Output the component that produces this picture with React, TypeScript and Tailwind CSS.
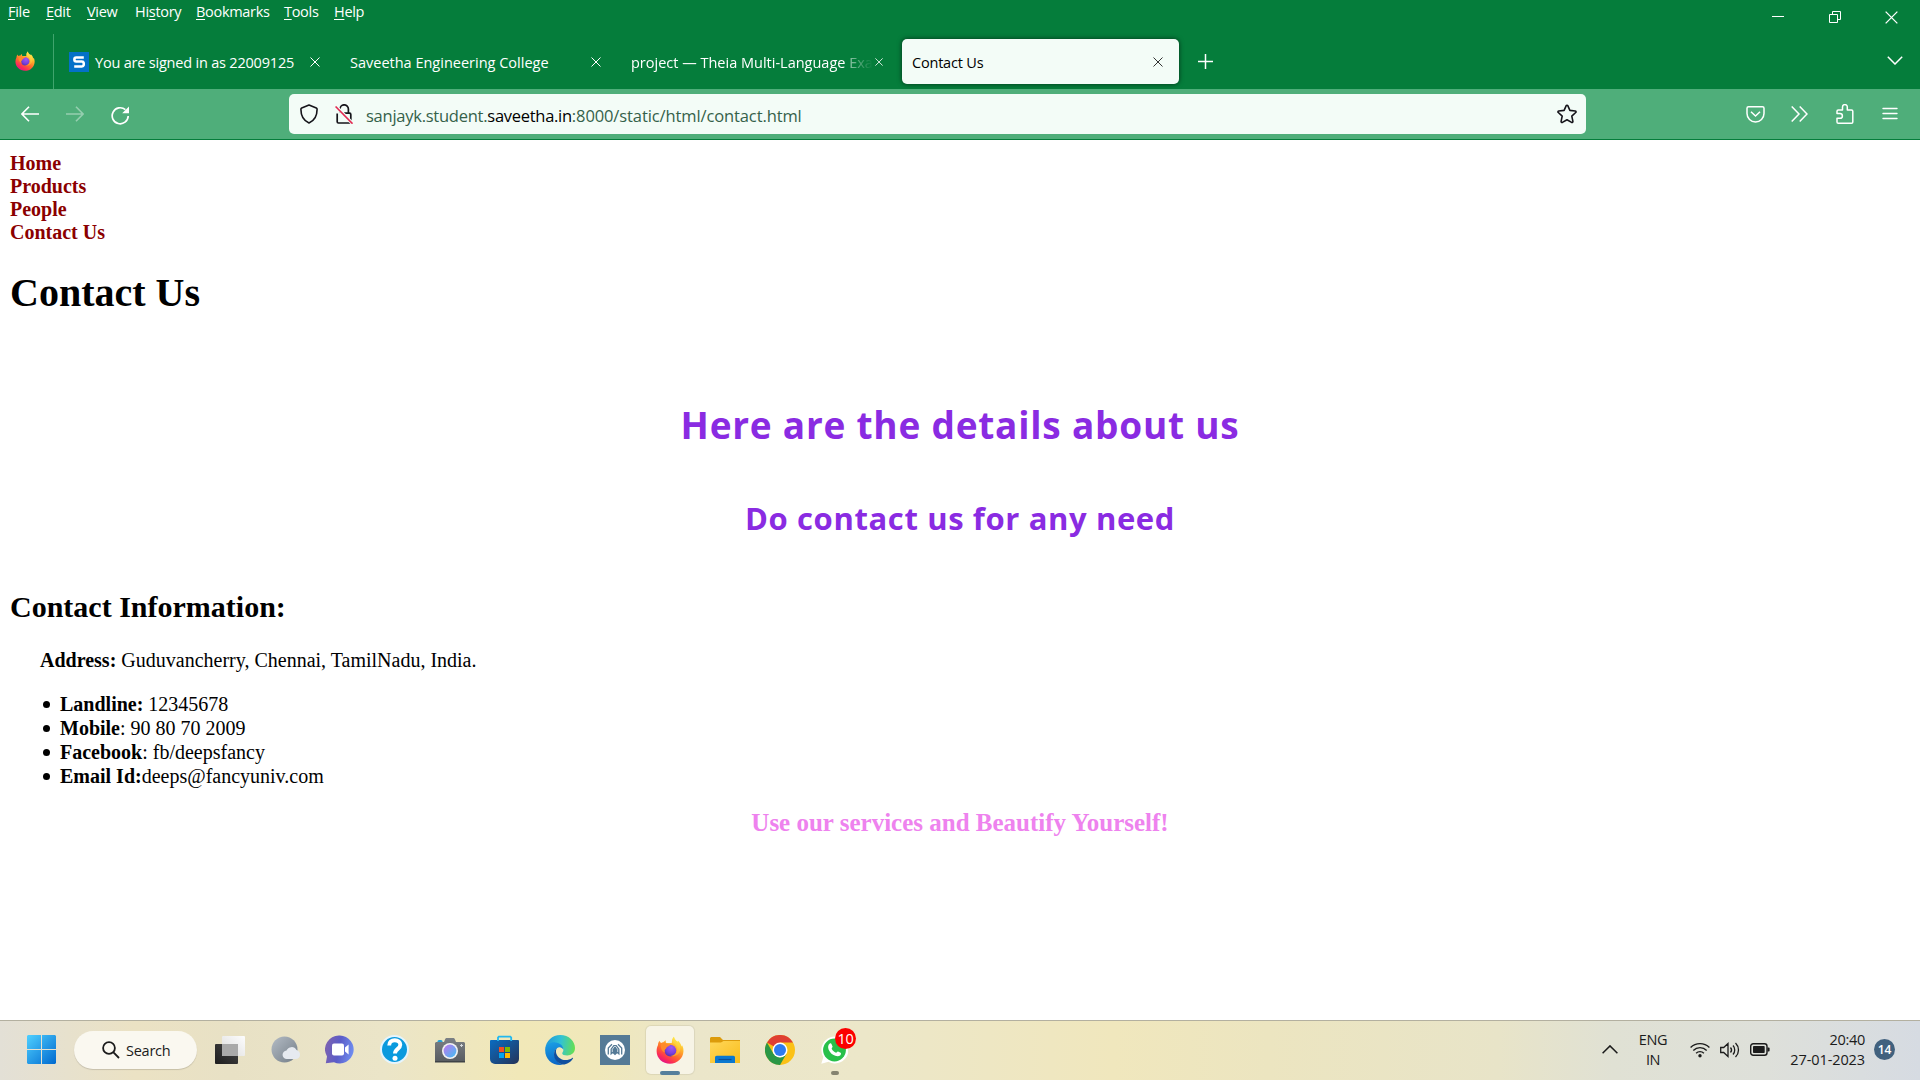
import React from "react";

const MENU = [
  { label: "File", key: 0, width: "w-[38px]" },
  { label: "Edit", key: 0, width: "w-[41px]" },
  { label: "View", key: 0, width: "w-[48px]" },
  { label: "History", key: 2, width: "w-[61px]" },
  { label: "Bookmarks", key: 0, width: "w-[88px]" },
  { label: "Tools", key: 0, width: "w-[50px]" },
  { label: "Help", key: 0, width: "w-[40px]" },
];

function FirefoxLogo({ id, size }: { id: string; size: number }) {
  return (
    <svg width={size} height={size} viewBox="0 0 32 32">
      <defs>
        <linearGradient id={id + "a"} x1="0.8" y1="0.05" x2="0.25" y2="0.95">
          <stop offset="0" stopColor="#fff44f" />
          <stop offset="0.3" stopColor="#ffb52c" />
          <stop offset="0.6" stopColor="#ff6a2b" />
          <stop offset="0.85" stopColor="#fb2b58" />
          <stop offset="1" stopColor="#e31587" />
        </linearGradient>
        <radialGradient id={id + "b"} cx="0.6" cy="0.25" r="0.8">
          <stop offset="0" stopColor="#a05af0" />
          <stop offset="0.6" stopColor="#7b3fe0" />
          <stop offset="1" stopColor="#4f35a8" />
        </radialGradient>
        <linearGradient id={id + "c"} x1="0.7" y1="0" x2="0.3" y2="1">
          <stop offset="0" stopColor="#fff44f" />
          <stop offset="1" stopColor="#ff9a25" />
        </linearGradient>
      </defs>
      <path
        fill={`url(#${id}a)`}
        d="M4 5.5c.5 1.300 1 2 1.800 2.600.9-.5 1.700-.7 2.500-.6.7-1.400 1.700-2.200 3-2.700-.4 1.500 0 2.500.5 3.200h6.200C18.200 4.800 19 2.200 20.500.800c.4 2.600 1.800 4 4 5.700.4-.2.7-.7.8-1.200 2.300 2 3.500 4.600 4 6.600.3-.4.500-.8.5-1.200 1.300 2.200 1.700 4.500 1.600 6.800C31.100 25.500 24.400 31.700 16 31.700S.700 25.200.700 17.300c0-2.600.5-4.900 1.600-7 0-1.700.6-3.400 1.700-4.800z"
      />
      <circle cx="16.400" cy="16.600" r="6.700" fill={`url(#${id}b)`} />
      <path
        fill={`url(#${id}c)`}
        d="M20.500.8c-2 2-2.700 4.600-1.300 7.200 3.500 1.700 5.500 5 4.800 8.700-.8 4-4.200 6-7.600 6 5 1.500 10.700-1.800 11.400-7.700.3-3.500-.8-6-3.300-8.500-2.200-1.700-3.600-3.100-4-5.700z"
        opacity="0.85"
      />
      <path
        fill="#ff8a2a"
        d="M5.800 8.100c1.600-.9 3.300-.8 5 .3 1.200.8 2.700 1.100 5 1.200.5 0 .3.900-.6 1.500l-2.600 1.600c-.6.500-.6 1.300-1.300 2-1.400 1.200-2.200 2.300-.8 4.300-3.700-1-5.700-4.500-4.700-10.900z"
      />
    </svg>
  );
}

function CloseX({ className, size = 10 }: { className?: string; size?: number }) {
  return (
    <svg className={className} width={size} height={size} viewBox="0 0 10 10" fill="none" stroke="currentColor" strokeWidth="1">
      <path d="M.5.5l9 9M9.500.5l-9 9" />
    </svg>
  );
}

function MenuRow() {
  return (
    <div className="flex h-[34px] items-start justify-between">
      <div className="flex pl-2 pt-0.5 text-[14.5px] leading-5 tracking-[-0.3px]">
        {MENU.map((m) => (
          <span key={m.label} className={m.width}>
            {m.label.slice(0, m.key)}
            <span className="underline decoration-1 underline-offset-2">{m.label[m.key]}</span>
            {m.label.slice(m.key + 1)}
          </span>
        ))}
      </div>
      <div className="flex h-[34px] items-center pr-[22px]">
        <svg className="mr-[45px]" width="12" height="12" viewBox="0 0 12 12" stroke="#fff" strokeWidth="1">
          <path d="M0 5.500h12" />
        </svg>
        <svg className="mr-[44px]" width="12" height="12" viewBox="0 0 12 12" fill="none" stroke="#fff">
          <path d="M.5 3.500h8v8h-8zM3.500 3.500v-3h8v8h-3" />
        </svg>
        <CloseX size={13} />
      </div>
    </div>
  );
}

function TabRow() {
  return (
    <div className="flex h-[55px] items-center text-[14.5px]">
      <div className="flex h-full w-[54px] items-center justify-center border-r border-[#4fae7a]/80 pb-0.5 pr-[3px]">
        <FirefoxLogo id="pin" size={20} />
      </div>
      <div className="ml-[5px] flex w-[281px] items-center pl-2.5 pr-5">
        <span className="mr-1.5 flex size-5 items-center justify-center bg-[#0471c8]">
          <svg width="12" height="12" viewBox="0 0 12 12" fill="none" stroke="#fff" strokeWidth="2.600">
            <path d="M10.800 1.500H3.200c-2.400 0-2.400 4 0 4h5.600c2.700 0 2.700 5 0 5H1.200" />
          </svg>
        </span>
        <span className="flex-1 whitespace-nowrap pt-0.5 tracking-[-0.2px]">You are signed in as 22009125</span>
        <CloseX />
      </div>
      <div className="flex w-[281px] items-center pl-2.5 pr-5">
        <span className="flex-1 whitespace-nowrap pt-0.5">Saveetha Engineering College</span>
        <CloseX />
      </div>
      <div className="flex w-[281px] items-center pl-2.5 pr-[19px]">
        <span className="mr-0.5 flex-1 whitespace-nowrap pt-0.5 [mask-image:linear-gradient(to_right,#000_89%,rgba(0,0,0,0.5)_91%,transparent)]">
          project — Theia Multi-Language Exa
        </span>
        <CloseX />
      </div>
      <div className="flex h-[45px] w-[277px] items-center rounded-[5px] bg-[#f3fcf7] pl-2.5 pr-4 text-black shadow-[0_0_5px_rgba(0,0,0,0.6)]">
        <span className="flex-1 pt-0.5 tracking-[-0.2px]">Contact Us</span>
        <CloseX className="text-[#333]" />
      </div>
      <svg className="ml-[19px]" width="15" height="15" viewBox="0 0 15 15" stroke="#fff" strokeWidth="1.500">
        <path d="M7.500 0v15M0 7.500h15" />
      </svg>
      <svg className="-mt-0.5 ml-auto mr-[17px]" width="16" height="9" viewBox="0 0 16 9" fill="none" stroke="#fff" strokeWidth="1.500">
        <path d="M.800.800L8 8l7.200-7.200" />
      </svg>
    </div>
  );
}

function Toolbar() {
  return (
    <div className="flex h-[51px] items-center border-b border-[#057d3b] bg-[#4fae7a]">
      <div className="flex w-[289px] items-center pl-[21px]">
        <svg className="mr-[27px]" width="18" height="16" viewBox="0 0 18 16" fill="none" stroke="#fff" strokeWidth="1.600">
          <path d="M8 .7L.9 8 8 15.300M1 8h17" />
        </svg>
        <svg className="mr-[27px] opacity-40" width="18" height="16" viewBox="0 0 18 16" fill="none" stroke="#fff" strokeWidth="1.600">
          <path d="M10 .7L17.100 8 10 15.300M17 8H0" />
        </svg>
        <svg className="mt-0.5" width="19" height="19" viewBox="0 0 19 19" fill="none" stroke="#fff" strokeWidth="1.700">
          <path d="M17.200 10a8 8 0 1 1-2.800-6.300" />
          <path d="M18 .4v6.800h-6.800z" fill="#fff" stroke="none" />
        </svg>
      </div>
      <div className="flex h-10 w-[1297px] items-center rounded-[5px] bg-[#f3fcf7] pl-[11px] pr-[9px] text-[16.5px] text-[#35614a]">
        <svg className="mr-[17px]" width="18" height="20" viewBox="0 0 18 20" fill="none" stroke="#15141a" strokeWidth="1.600" strokeLinejoin="round">
          <path d="M9 1l7.300 3.100c.5.200.8.600.8 1.200 0 6-2.400 11.300-8.100 13.700C3.300 16.600.9 11.300.9 5.300c0-.6.3-1 .8-1.200z" />
        </svg>
        <svg className="mr-[13px]" width="18" height="20" viewBox="0 0 18 20" fill="none">
          <path d="M5 8.500V5a4.200 4.200 0 0 1 8.400 0v3.500M2.200 9.500v8.300c0 .8.500 1.200 1.200 1.200h11.200c.7 0 1.200-.4 1.200-1.200v-7.300c0-.8-.5-1.300-1.200-1.300H6" stroke="#15141a" strokeWidth="1.700" />
          <path d="M1 2.500l16.500 17" stroke="#f3fcf7" strokeWidth="3.500" />
          <path d="M.600 2.500L17.500 19.700" stroke="#e22850" strokeWidth="1.600" />
        </svg>
        <span className="whitespace-nowrap pt-[5px]">
          <span className="tracking-[-0.25px]">sanjayk.student.</span>
          <span className="tracking-[-0.28px] text-black">saveetha.in</span>
          <span className="tracking-[-0.11px]">:8000/static/html/contact.html</span>
        </span>
        <svg className="ml-auto" width="20" height="20" viewBox="0 0 20 20" fill="none" stroke="#15141a" strokeWidth="1.600" strokeLinejoin="round">
          <path d="M10 1.200c.4 0 .7.200.8.500l2.100 4.700 5.300.6c.8.100 1.100 1 .5 1.500l-3.900 3.600 1.100 5.300c.1.800-.6 1.300-1.300 1L10 15.700l-4.600 2.700c-.7.300-1.400-.2-1.300-1l1.100-5.300L1.300 8.500C.7 8 1 7.100 1.800 7l5.300-.6 2.100-4.700c.1-.3.400-.5.8-.5z" />
        </svg>
      </div>
      <div className="ml-auto flex items-center pr-[22px]">
        <svg className="mr-[26px]" width="19" height="17" viewBox="0 0 19 17" fill="none" stroke="#fff" strokeWidth="1.500">
          <path d="M2.500.8h14c.9 0 1.500.6 1.500 1.500V7.500a8.500 8.500 0 0 1-17 0V2.300C1 1.400 1.600.8 2.500.8zM5 5.700l4.500 4.300L14 5.700" />
        </svg>
        <svg className="mr-[28px]" width="17" height="16" viewBox="0 0 17 16" fill="none" stroke="#fff" strokeWidth="1.500">
          <path d="M.700.500L8 8 .700 15.500M8.700.500L16 8l-7.300 7.500" />
        </svg>
        <svg className="mr-[28px]" width="18" height="20" viewBox="0 0 18 20" fill="none" stroke="#fff" strokeWidth="1.500" strokeLinejoin="round">
          <path d="M6.500 6V3a2.400 2.400 0 0 1 4.800 0v3h4.200c.9 0 1.300.5 1.300 1.300v10.600c0 .8-.4 1.300-1.300 1.300H2.300c-.8 0-1.300-.5-1.300-1.300v-3.600h3a2.400 2.400 0 0 0 0-4.800H1V7.300C1 6.500 1.500 6 2.300 6z" />
        </svg>
        <svg className="-mt-px" width="16" height="13" viewBox="0 0 16 13" stroke="#fff" strokeWidth="1.400" strokeLinecap="round">
          <path d="M1 1.500h14M1 6.500h14M1 11.500h14" />
        </svg>
      </div>
    </div>
  );
}

const DETAILS = [
  { name: "Landline:", value: " 12345678" },
  { name: "Mobile", value: ": 90 80 70 2009" },
  { name: "Facebook", value: ": fb/deepsfancy" },
  { name: "Email Id:", value: "deeps@fancyuniv.com" },
];

function Page() {
  return (
    <main className="flex-1 bg-white px-2.5 pt-3 font-['Liberation_Serif',serif] text-xl leading-[23px] text-black">
      <nav className="flex flex-col font-bold text-[#8b0000]">
        <a>Home</a>
        <a>Products</a>
        <a>People</a>
        <a>Contact Us</a>
      </nav>
      <h1 className="mt-[26px] text-[40px] font-bold leading-[46px]">Contact Us</h1>
      <div className="mt-[85px] text-center font-['Open_Sans',sans-serif] font-bold text-[#8a2be2]">
        <h1 className="text-[37px] leading-[48px] tracking-[0.77px]">Here are the details about us</h1>
        <h2 className="mt-[49px] text-[31px] leading-10 tracking-[0.62px]">Do contact us for any need</h2>
      </div>
      <h2 className="mt-[52px] text-[30px] font-bold leading-[34px]">Contact Information:</h2>
      <p className="ml-[30px] mt-[25px]">
        <b>Address:</b> Guduvancherry, Chennai, TamilNadu, India.
      </p>
      <ul className="ml-[33px] mt-5">
        {DETAILS.map((d) => (
          <li key={d.name} className="flex h-6 items-center whitespace-pre leading-6">
            <span className="mr-2.5 mt-px size-[7px] rounded-full bg-black" />
            <span>
              <b>{d.name}</b>
              {d.value}
            </span>
          </li>
        ))}
      </ul>
      <h3 className="mt-5 text-center text-[25px] font-bold leading-[29px] text-[#ee82ee]">Use our services and Beautify Yourself!</h3>
    </main>
  );
}

function Cell({ children }: { children: React.ReactNode }) {
  return <div className="relative flex h-full w-[55px] shrink-0 items-center justify-center">{children}</div>;
}

function Taskbar() {
  return (
    <footer className="flex h-[60px] items-center border-t border-[#b3b0a0] bg-[linear-gradient(90deg,#e3e0d6_0%,#ebe2c4_7%,#e8e1c5_12%,#ebe5c8_20%,#f1e8b8_27%,#f0e8ba_31%,#ebe6ca_36%,#ece7c9_45%,#f0e7bd_58%,#ece5c0_66%,#e8e4c8_78%,#e0e1d4_84%,#dee0da_92%,#d6dbe2_100%)] pb-0.5 text-[15px] leading-5 text-[#1b1b1b]">
      <svg className="ml-[27px]" width="29" height="29" viewBox="0 0 29 29">
        <defs>
          <linearGradient id="win" x1="0" y1="0" x2="1" y2="1">
            <stop offset="0" stopColor="#4fd0ff" />
            <stop offset="1" stopColor="#0069cf" />
          </linearGradient>
        </defs>
        <path fill="url(#win)" d="M1 0h13v14H0V1zM15 0h13l1 1v13H15zM0 15h14v14H1l-1-1zM15 15h14v13l-1 1H15z" />
      </svg>
      <div className="ml-[18px] flex h-[38px] w-[123px] items-center rounded-full bg-[#faf8f0] pl-7 shadow-[0_1px_1px_rgba(0,0,0,0.15)]">
        <svg className="mr-[6px]" width="18" height="18" viewBox="0 0 18 18" fill="none" stroke="#1b1b1b" strokeWidth="1.800">
          <circle cx="7" cy="7" r="5.900" />
          <path d="M11.200 11.200l5.800 5.800" />
        </svg>
        <span className="pt-0.5 text-[14.5px] tracking-[-0.25px]">Search</span>
      </div>
      <div className="ml-[5px] flex h-full">
        <Cell>
          <svg width="30" height="28" viewBox="0 0 30 28">
            <defs>
              <linearGradient id="tvd" x1="0" y1="1" x2="1" y2="0">
                <stop offset="0" stopColor="#1d1d1d" />
                <stop offset="1" stopColor="#474747" />
              </linearGradient>
              <linearGradient id="tvl" x1="0" y1="1" x2="1" y2="0">
                <stop offset="0" stopColor="#dcdcdc" />
                <stop offset="1" stopColor="#fdfdfd" />
              </linearGradient>
            </defs>
            <rect y="8" width="23" height="20" rx="1" fill="url(#tvd)" />
            <rect x="7" width="23" height="20" rx="1" fill="url(#tvl)" />
            <path d="M7 8h16v12H8l-1-1z" fill="#a9a9a9" />
          </svg>
        </Cell>
        <Cell>
          <svg className="ml-0.5" width="29" height="27" viewBox="0 0 29 27">
            <defs>
              <linearGradient id="wx" x1="0" y1="0" x2="1" y2="1">
                <stop offset="0" stopColor="#b4bcc5" />
                <stop offset="1" stopColor="#737d87" />
              </linearGradient>
            </defs>
            <circle cx="13.500" cy="13.500" r="13" fill="url(#wx)" />
            <path d="M16 23a4.200 4.200 0 0 1-.5-8.400 5.500 5.500 0 0 1 10-.5c2.300.6 3.500 2.200 3.500 4.600 0 2.500-1.800 4.300-4.300 4.300z" fill="#e6eaf0" />
          </svg>
        </Cell>
        <Cell>
          <svg width="30" height="29" viewBox="0 0 30 29">
            <defs>
              <linearGradient id="chat" x1="0" y1="0.300" x2="1" y2="0.500">
                <stop offset="0" stopColor="#7d62b0" />
                <stop offset="0.500" stopColor="#5b5cc8" />
                <stop offset="1" stopColor="#6f8df0" />
              </linearGradient>
            </defs>
            <path d="M15 .5a14 14 0 1 1-6 26.800L.8 28.300 2 21.500A14 14 0 0 1 15 .5z" fill="url(#chat)" />
            <rect x="7" y="8.500" width="12" height="12" rx="2" fill="#fff" />
            <path d="M20 12.500l3.600-3v10l-3.600-3z" fill="#fff" />
          </svg>
        </Cell>
        <Cell>
          <span className="flex size-[29px] items-center justify-center rounded-full border-2 border-white/90 bg-[#0a9ade]">
            <svg width="16" height="23" viewBox="0 0 16 23" fill="none" stroke="#fff" strokeWidth="3.900">
              <path d="M2.200 7.500C2.200 4 4.500 2.300 7.800 2.300s5.500 1.800 5.500 4.500c0 4.200-5.300 4-5.300 8.700" />
              <circle cx="8" cy="20.300" r="2.500" fill="#fff" stroke="none" />
            </svg>
          </span>
        </Cell>
        <Cell>
          <svg width="30" height="26" viewBox="0 0 30 26">
            <defs>
              <linearGradient id="lens" x1="0" y1="0" x2="1" y2="1">
                <stop offset="0.100" stopColor="#b57cf0" />
                <stop offset="1" stopColor="#3fc0f2" />
              </linearGradient>
              <linearGradient id="cam" x1="0" y1="0" x2="0" y2="1">
                <stop offset="0" stopColor="#7b8085" />
                <stop offset="1" stopColor="#575b60" />
              </linearGradient>
            </defs>
            <rect x="2.500" y="3" width="5" height="4" rx="1.500" fill="#25a0d8" />
            <path d="M10 2.500C10.500 1.200 11 1 12 1h6c1 0 1.500.2 2 1.500L21 5h8l1 1v19H0V6l1-1h8z" fill="url(#cam)" />
            <path d="M0 24h30v1.500H0z" fill="#3f4347" />
            <circle cx="15" cy="14" r="8" fill="#f2f2f2" />
            <circle cx="15" cy="14" r="6.400" fill="url(#lens)" />
            <path d="M26.500 7v3M25 8.500h3" stroke="#d6d9dc" />
          </svg>
        </Cell>
        <Cell>
          <svg width="29" height="29" viewBox="0 0 29 29">
            <defs>
              <linearGradient id="store" x1="0" y1="0" x2="1" y2="1">
                <stop offset="0" stopColor="#0a6cc2" />
                <stop offset="1" stopColor="#253358" />
              </linearGradient>
            </defs>
            <path d="M0 5.500l1-.5h27l1 .5V24a5 5 0 0 1-5 5H5a5 5 0 0 1-5-5z" fill="url(#store)" />
            <path d="M8 6V2.500l.8-.8h11.600l.8.800V6" fill="none" stroke="#22b8ef" strokeWidth="1.800" />
            <path d="M9 12h5v5H9z" fill="#f25022" />
            <path d="M15 12h5v5h-5z" fill="#7fba00" />
            <path d="M9 18h5v5H9z" fill="#00a4ef" />
            <path d="M15 18h5v5h-5z" fill="#ffb900" />
          </svg>
        </Cell>
        <Cell>
          <svg width="30" height="30" viewBox="0 0 30 30">
            <defs>
              <linearGradient id="edt" x1="0" y1="0.500" x2="1" y2="0.600">
                <stop offset="0" stopColor="#1f97da" />
                <stop offset="0.500" stopColor="#32c2d4" />
                <stop offset="1" stopColor="#66e04f" />
              </linearGradient>
              <linearGradient id="edb" x1="0.300" y1="0" x2="0.500" y2="1">
                <stop offset="0" stopColor="#1a9de4" />
                <stop offset="1" stopColor="#0a66c6" />
              </linearGradient>
            </defs>
            <path d="M.2 14C1 5.800 7.300 0 15.200 0 24 0 30 6.300 30 13c0 4.700-3.600 7.500-7.800 7.500-3 0-5-1-5-2.300 0-.7 1.200-1.200 1.200-3.400 0-3-2.700-5-6.500-5C6 9.800 1.800 12 .2 14z" fill="url(#edt)" />
            <path d="M.2 14c1.600-5 5.500-7 10.200-6.600 4.600.4 8 3.300 8 7.400-1-2-2.700-2.900-4.200-2.600-3.200.6-5.200 3.800-4.700 7.600C10 24.500 13 28.500 18 29.600 8.500 31.500-.5 24.500.2 14z" fill="url(#edb)" />
            <path d="M12.300 12.800c-2.300 2.400-1.500 6.800 1.500 9.600 3.500 3.200 9 3.400 13.600.5.500-.2.900.2.600.7-2.200 3.600-6 6-10 6-5.500-1-9-5.200-9-10 0-3 1.300-5.500 3.300-6.800z" fill="#0f4f9f" />
          </svg>
        </Cell>
        <Cell>
          <span className="flex size-[30px] items-center justify-center bg-[#557a96]">
            <svg width="20" height="20" viewBox="0 0 20 20" fill="none">
              <circle cx="10" cy="10" r="10" fill="#fff" />
              <path d="M3.300 14.500V8L7 4.200M16.700 14.500V8L13 4.200" stroke="#557a96" strokeWidth="1.300" />
              <path d="M5.500 15.200V9l3-4h3l3 4v6.200l-2.300-2-2.200 2-2.200-2z" fill="#557a96" />
              <path d="M7.300 12V9.300L9.200 6.500h1.600l1.900 2.800V12" stroke="#fff" strokeWidth=".7" />
            </svg>
          </span>
        </Cell>
        <Cell>
          <div className="flex h-12 w-12 items-center justify-center rounded-[5px] bg-[#f7f4e6] shadow-[0_0_1px_1px_rgba(0,0,0,0.07)]">
            <FirefoxLogo id="task" size={28} />
          </div>
          <span className="absolute bottom-[3px] left-[18px] h-1 w-5 rounded-full bg-[#557f9c]" />
        </Cell>
        <Cell>
          <svg width="30" height="26" viewBox="0 0 30 26">
            <defs>
              <linearGradient id="fold" x1="0" y1="0" x2="1" y2="1">
                <stop offset="0" stopColor="#ffd75a" />
                <stop offset="1" stopColor="#f9bd1b" />
              </linearGradient>
            </defs>
            <path d="M0 1l1-1h9l3 3h17v5H0z" fill="#dc9b0b" />
            <path d="M0 5.500h11L13.500 4H30v22H0z" fill="url(#fold)" />
            <path d="M5 26v-5.500c0-1 .7-1.700 1.700-1.700h16.600c1 0 1.700.7 1.700 1.700V26z" fill="#0a78d0" />
            <path d="M8.500 22.500h13" stroke="#0b4f98" strokeWidth="1.200" />
          </svg>
        </Cell>
        <Cell>
          <svg width="30" height="30" viewBox="0 0 30 30">
            <circle cx="15" cy="15" r="15" fill="#fbc116" />
            <path d="M15 15L2 7.500A15 15 0 0 1 28 7.500H15z" fill="#df3f32" />
            <path d="M2 7.500A15 15 0 0 0 15 30l6.500-11.300L15 22.500 8.500 18.700z" fill="#2a9746" />
            <circle cx="15" cy="15" r="7.500" fill="#fff" />
            <circle cx="15" cy="15" r="6" fill="#2f7bee" />
          </svg>
        </Cell>
        <Cell>
          <svg width="27" height="28" viewBox="0 0 26 27">
            <path d="M13 .5a13 13 0 1 1-5.800 24.400L.3 26.700l1.900-6.500A13 13 0 0 1 13 .5z" fill="#fff" />
            <circle cx="13" cy="13.500" r="11" fill="#28c04a" />
            <path d="M8.200 7.500c.8-.7 1.500-.6 1.900.2l1 2.400c.3.700-.9 1.500-.9 2 .8 1.900 2.300 3.300 4.300 4.100.6 0 1.200-1.500 1.900-1.200l2.500 1.200c.7.400.3 1.700-.2 2.300-1.300 1.300-3.200 1.300-5 .6-3-1.100-5.200-3.300-6.400-6.200-.8-2-.5-4.200.9-5.400z" fill="#fff" />
          </svg>
          <span className="absolute left-[28px] top-[7px] flex size-[21px] items-center justify-center rounded-full bg-[#fb0000] text-[14.5px] tracking-[-0.4px] text-white">10</span>
          <span className="absolute bottom-[3px] left-6 h-1 w-2 rounded-full bg-[#858370]" />
        </Cell>
      </div>
      <div className="ml-auto flex items-center">
        <svg className="mr-[20px]" width="16" height="9" viewBox="0 0 16 9" fill="none" stroke="#1b1b1b" strokeWidth="1.500">
          <path d="M.600 8.300L8 .900l7.400 7.400" />
        </svg>
        <div className="mr-[22px] w-[30px] pt-px text-center text-[14.5px] tracking-[-0.4px]">
          <div>ENG</div>
          <div>IN</div>
        </div>
        <svg className="mr-2.5" width="20" height="16" viewBox="0 0 20 16" fill="none" stroke="#1b1b1b" strokeWidth="1.400">
          <path d="M.600 5.500a13.300 13.300 0 0 1 18.800 0M3.300 8.400a9.500 9.500 0 0 1 13.400 0M6.100 11.200a5.600 5.600 0 0 1 7.800 0" />
          <circle cx="10" cy="13.700" r="1.700" fill="#1b1b1b" stroke="none" />
        </svg>
        <svg className="mr-2.5" width="20" height="16" viewBox="0 0 20 16" fill="none" stroke="#1b1b1b" strokeWidth="1.300">
          <path d="M.700 5.500h3L8 1.500v13l-4.300-4h-3zM10.500 5.500c1.200 1.400 1.200 3.600 0 5M13 3.500c2.300 2.500 2.300 6.500 0 9M15.500 1c4 4 4 10 0 14" />
        </svg>
        <svg className="mr-[13px]" width="20" height="13" viewBox="0 0 20 13" fill="none" stroke="#1b1b1b">
          <rect x=".700" y=".700" width="16.300" height="11.600" rx="2.500" strokeWidth="1.400" />
          <rect x="3" y="3" width="11.700" height="7" rx=".8" fill="#1b1b1b" stroke="none" />
          <path d="M17.500 4.500h1.200c.6 0 .9.400.9 1v2c0 .6-.3 1-.9 1h-1.200z" fill="#1b1b1b" stroke="none" />
        </svg>
        <div className="mr-[9px] w-[82px] text-right text-[14.5px] tracking-[-0.1px]">
          <div className="tracking-[-0.3px]">20:40</div>
          <div>27-01-2023</div>
        </div>
        <span className="mr-[25px] flex size-[21px] items-center justify-center rounded-full bg-[#41617e] text-xs font-semibold text-white">14</span>
      </div>
    </footer>
  );
}

export default function App() {
  return (
    <div className="flex h-[1080px] w-[1920px] flex-col overflow-hidden font-['Open_Sans',sans-serif]">
      <header className="bg-[#057d3b] text-white">
        <MenuRow />
        <TabRow />
        <Toolbar />
      </header>
      <Page />
      <Taskbar />
    </div>
  );
}
